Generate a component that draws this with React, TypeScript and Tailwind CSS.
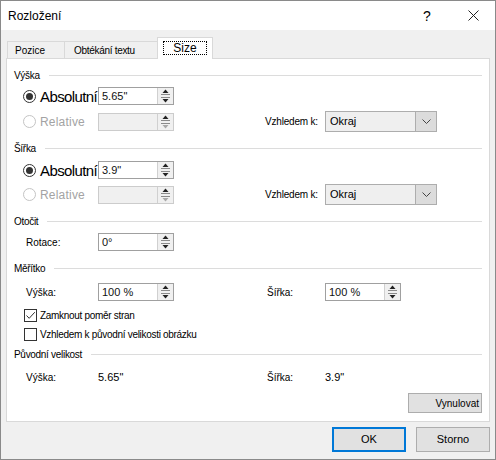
const Radio = ({ on = false, disabled = false }: { on?: boolean; disabled?: boolean }) => (
  <div
    className={`flex h-[13px] w-[13px] shrink-0 items-center justify-center rounded-full border bg-white ${
      disabled ? "border-[#c4c4c4]" : "border-[#333333]"
    }`}
  >
    {on && <div className="h-[7px] w-[7px] rounded-full bg-[#333333]" />}
  </div>
);

const Check = ({ on = false }: { on?: boolean }) => (
  <div className="flex h-[13px] w-[13px] shrink-0 items-center justify-center border border-[#333333] bg-white">
    {on && (
      <svg width="11" height="11" viewBox="0 0 11 11">
        <path d="M1.5 5.5 L4.2 8.3 L9.8 2.2" stroke="#333" strokeWidth="1" fill="none" />
      </svg>
    )}
  </div>
);

const Spin = ({ value = "", disabled = false }: { value?: string; disabled?: boolean }) => (
  <div
    className={`flex h-[18px] w-[76px] shrink-0 border ${
      disabled ? "border-[#cccccc] bg-[#f0f0f0]" : "border-[#a0a0a0] bg-white"
    }`}
  >
    <div className="flex-1 pl-[3px] text-[11px] leading-[16px] text-[#111]">{value}</div>
    <div className="flex w-[16px] flex-col border-l border-[#d0d0d0] bg-[#f0f0f0]">
      <div className="flex flex-1 flex-col items-center justify-end pb-[1px]">
        <svg width="7" height="4" viewBox="0 0 7 4">
          <path d="M0.5 4 L3.5 0.5 L6.5 4Z" fill="#222" />
        </svg>
        <div className="mt-[1px] h-px w-[9px] bg-[#8a8a8a]" />
      </div>
      <div className="flex flex-1 flex-col items-center justify-start pt-[1px]">
        <div className="mb-[1px] h-px w-[9px] bg-[#8a8a8a]" />
        <svg width="7" height="4" viewBox="0 0 7 4">
          <path d="M0.5 0 L3.5 3.5 L6.5 0Z" fill={disabled ? "#a8a8a8" : "#222"} />
        </svg>
      </div>
    </div>
  </div>
);

const Select = () => (
  <div className="flex h-[21px] w-[112px] shrink-0 border border-[#adadad] bg-[#efefef]">
    <div className="flex-1 pl-[4px] text-[11px] leading-[19px] text-black">Okraj</div>
    <div className="flex w-[21px] items-center justify-center border-l border-[#adadad] bg-[#dcdcdc]">
      <svg width="9" height="5" viewBox="0 0 9 5">
        <path d="M0.5 0.5 L4.5 4.5 L8.5 0.5" stroke="#444" fill="none" />
      </svg>
    </div>
  </div>
);

const Group = ({ title, mt }: { title: string; mt: string }) => (
  <div className={`flex h-[14px] items-center gap-[9px] ${mt}`}>
    <span className="text-[10px] tracking-[-0.3px] text-black">{title}</span>
    <div className="h-px flex-1 bg-[#dcdcdc]" />
  </div>
);

const Absolute = ({ value, mt }: { value: string; mt: string }) => (
  <div className={`flex h-[18px] items-center ${mt}`}>
    <div className="flex w-[84px] items-center overflow-hidden whitespace-nowrap pl-[9px]">
      <Radio on />
      <span className="ml-[4px] text-[15px] leading-none tracking-[-0.6px] text-black">Absolutní</span>
    </div>
    <Spin value={value} />
  </div>
);

const Relative = ({ mt }: { mt: string }) => (
  <div className={`flex h-[21px] items-center ${mt}`}>
    <div className="flex w-[84px] items-center pl-[9px]">
      <Radio disabled />
      <span className="ml-[4px] text-[12px] tracking-[0.2px] text-[#a3a3a3]">Relative</span>
    </div>
    <Spin disabled />
    <span className="ml-[91px] w-[60px] text-[10px] tracking-[-0.2px] text-black">Vzhledem k:</span>
    <Select />
  </div>
);

export default function App() {
  return (
    <div className="flex h-[460px] w-[496px] flex-col border border-[#8a8a8a] bg-[#f0f0f0] font-['Liberation_Sans',Arial,sans-serif] text-black">
      <div className="flex h-[29px] items-center bg-white pl-[7px] pr-[16px]">
        <span className="text-[12px]">Rozložení</span>
        <span className="ml-auto w-[10px] text-center text-[14px] leading-none">?</span>
        <svg className="ml-[36px]" width="11" height="11" viewBox="0 0 11 11">
          <path d="M0.5 0.5 L10.5 10.5 M10.5 0.5 L0.5 10.5" stroke="#222" strokeWidth="1" />
        </svg>
      </div>

      <div className="mt-[7px] flex h-[21px] items-end pl-[6px]">
        <div className="h-[17px] w-[57px] border-l border-t border-[#d9d9d9] pl-[7px] text-[10px] leading-[17px]">
          Pozice
        </div>
        <div className="h-[17px] w-[93px] border-l border-t border-[#d9d9d9] pl-[9px] text-[10px] tracking-[-0.3px] leading-[17px]">
          Obtékání textu
        </div>
        <div className="relative z-10 -mb-px h-[22px] w-[56px] border-l border-r border-t border-[#d9d9d9] bg-white pl-[5px] pt-[3px]">
          <div className="flex h-[14px] w-[44px] items-center justify-center border border-dotted border-black text-[12px] leading-none">
            Size
          </div>
        </div>
      </div>

      <div className="mx-[5px] flex h-[364px] flex-col border border-[#d9d9d9] bg-white pl-[7px] pr-[7px] pt-[9px]">
        <Group title="Výška" mt="mt-0" />
        <Absolute value={'5.65"'} mt="mt-[5px]" />
        <Relative mt="mt-[6px]" />

        <Group title="Šířka" mt="mt-[9px]" />
        <Absolute value={'3.9"'} mt="mt-[6px]" />
        <Relative mt="mt-[5px]" />

        <Group title="Otočit" mt="mt-[9px]" />
        <div className="mt-[5px] flex h-[18px] items-center">
          <span className="w-[84px] pl-[12px] text-[10px]">Rotace:</span>
          <Spin value="0°" />
        </div>

        <Group title="Měřítko" mt="mt-[10px]" />
        <div className="mt-[8px] flex h-[18px] items-center">
          <span className="w-[84px] pl-[12px] text-[10px]">Výška:</span>
          <Spin value="100 %" />
          <span className="ml-[93px] w-[58px] text-[10px]">Šířka:</span>
          <Spin value="100 %" />
        </div>
        <div className="mt-[7px] flex h-[14px] items-center pl-[10px]">
          <Check on />
          <span className="ml-[3px] text-[10px] tracking-[-0.3px]">Zamknout poměr stran</span>
        </div>
        <div className="mt-[5px] flex h-[14px] items-center pl-[10px]">
          <Check />
          <span className="ml-[3px] text-[10px] tracking-[-0.3px]">Vzhledem k původní velikosti obrázku</span>
        </div>

        <Group title="Původní velikost" mt="mt-[6px]" />
        <div className="mt-[9px] flex h-[14px] items-center">
          <span className="w-[84px] pl-[12px] text-[10px]">Výška:</span>
          <span className="w-[169px] text-[11px]">5.65"</span>
          <span className="w-[58px] text-[10px]">Šířka:</span>
          <span className="text-[11px]">3.9"</span>
        </div>
        <div className="mt-[9px] flex justify-end">
          <div className="flex h-[20px] w-[74px] items-center justify-end border border-[#adadad] bg-[#e1e1e1] pr-[2px] text-[10px]">
            Vynulovat
          </div>
        </div>
      </div>

      <div className="mt-[5px] flex justify-end gap-[10px] pr-[5px]">
        <div className="flex h-[25px] w-[74px] items-center justify-center border-2 border-[#0078d7] bg-[#e1e1e1] text-[11px]">
          OK
        </div>
        <div className="flex h-[25px] w-[74px] items-center justify-center border border-[#adadad] bg-[#e1e1e1] text-[11px]">
          Storno
        </div>
      </div>
    </div>
  );
}
